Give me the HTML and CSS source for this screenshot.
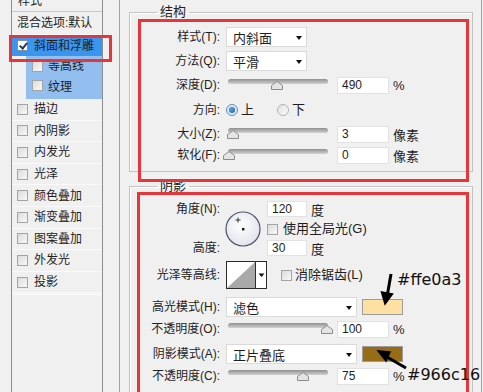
FILE: index.html
```html
<!DOCTYPE html>
<html lang="zh-CN">

<head>
    <meta charset="UTF-8">
    <title>图层样式 - 斜面和浮雕</title>
    <link rel="stylesheet" href="styles.css">
</head>

<body>
    <div class="sidebar">
        <div class="list">
            <div class="item head">样式</div>
            <div class="item blend">混合选项:默认</div>
            <div class="item selected"><span class="check on"></span>斜面和浮雕</div>
            <div class="item sub first"><span class="check"></span>等高线</div>
            <div class="item sub last"><span class="check"></span>纹理</div>
            <div class="item"><span class="check"></span>描边</div>
            <div class="item"><span class="check"></span>内阴影</div>
            <div class="item"><span class="check"></span>内发光</div>
            <div class="item"><span class="check"></span>光泽</div>
            <div class="item"><span class="check"></span>颜色叠加</div>
            <div class="item"><span class="check"></span>渐变叠加</div>
            <div class="item"><span class="check"></span>图案叠加</div>
            <div class="item"><span class="check"></span>外发光</div>
            <div class="item"><span class="check"></span>投影</div>
        </div>
    </div>

    <div class="main">
        <fieldset class="group structure">
            <legend>结构</legend>
            <div class="row h24">
                <label class="lbl">样式(T):</label>
                <div class="select short">内斜面<span class="caret"></span></div>
            </div>
            <div class="row h24">
                <label class="lbl">方法(Q):</label>
                <div class="select short">平滑<span class="caret"></span></div>
            </div>
            <div class="row h24">
                <label class="lbl">深度(D):</label>
                <div class="slider"><span class="track"></span><span class="thumb" style="left:49%"><svg width="12" height="9" viewBox="0 0 12 9"><path d="M6 0.5L11.5 4.5V8.5H0.5V4.5Z" fill="#e4e4e4" stroke="#8c8c8c"/></svg></span></div>
                <input class="num" value="490">
                <span class="unit">%</span>
            </div>
            <div class="row h26">
                <label class="lbl">方向:</label>
                <span class="radio on"></span><span class="opt">上</span>
                <span class="radio gap"></span><span class="opt">下</span>
            </div>
            <div class="row h22">
                <label class="lbl">大小(Z):</label>
                <div class="slider"><span class="track"></span><span class="thumb" style="left:5%"><svg width="12" height="9" viewBox="0 0 12 9"><path d="M6 0.5L11.5 4.5V8.5H0.5V4.5Z" fill="#e4e4e4" stroke="#8c8c8c"/></svg></span></div>
                <input class="num" value="3">
                <span class="unit">像素</span>
            </div>
            <div class="row h20">
                <label class="lbl">软化(F):</label>
                <div class="slider"><span class="track"></span><span class="thumb" style="left:1%"><svg width="12" height="9" viewBox="0 0 12 9"><path d="M6 0.5L11.5 4.5V8.5H0.5V4.5Z" fill="#e4e4e4" stroke="#8c8c8c"/></svg></span></div>
                <input class="num" value="0">
                <span class="unit">像素</span>
            </div>
        </fieldset>

        <fieldset class="group shading">
            <legend>阴影</legend>
            <div class="angle">
                <label class="lbl r1">角度(N):</label>
                <div class="dial">
                    <svg width="36" height="36" viewBox="0 0 36 36">
                        <defs>
                            <radialGradient id="dialFill" cx="0.45" cy="0.4" r="0.6">
                                <stop offset="0" stop-color="#ffffff"/>
                                <stop offset="1" stop-color="#e2e4ea"/>
                            </radialGradient>
                        </defs>
                        <circle cx="18" cy="18" r="17" fill="url(#dialFill)" stroke="#4a5470" stroke-width="1.2"/>
                        <path d="M13 6.5V11.5M10.5 9H15.5" stroke="#333" stroke-width="1"/>
                        <rect x="17" y="17" width="2.4" height="2.4" fill="#111"/>
                    </svg>
                </div>
                <div class="ctl r1"><input class="num small" value="120"><span class="unit">度</span></div>
                <div class="ctl r2"><span class="check"></span><span class="opt">使用全局光(G)</span></div>
                <label class="lbl r3">高度:</label>
                <div class="ctl r3"><input class="num small" value="30"><span class="unit">度</span></div>
            </div>
            <div class="row contour-row">
                <label class="lbl">光泽等高线:</label>
                <div class="contour">
                    <svg width="41" height="28" viewBox="0 0 41 28">
                        <rect x="0.5" y="0.5" width="40" height="27" fill="#fff" stroke="#2a2a2a"/>
                        <path d="M1 27L29 1V27Z" fill="#a9a9a9"/>
                        <path d="M29.5 1V27" stroke="#2a2a2a"/>
                        <path d="M32.5 12.5H38.5L35.5 16Z" fill="#111"/>
                    </svg>
                </div>
                <span class="check aa"></span><span class="opt">消除锯齿(L)</span>
            </div>
            <div class="row h22 mt5">
                <label class="lbl">高光模式(H):</label>
                <div class="select long">滤色<span class="caret"></span></div>
                <span class="swatch light"></span>
            </div>
            <div class="row h22">
                <label class="lbl">不透明度(O):</label>
                <div class="slider"><span class="track"></span><span class="thumb" style="left:99%"><svg width="12" height="9" viewBox="0 0 12 9"><path d="M6 0.5L11.5 4.5V8.5H0.5V4.5Z" fill="#e4e4e4" stroke="#8c8c8c"/></svg></span></div>
                <input class="num" value="100">
                <span class="unit">%</span>
            </div>
            <div class="row h22 mt3">
                <label class="lbl">阴影模式(A):</label>
                <div class="select long">正片叠底<span class="caret"></span></div>
                <span class="swatch dark"></span>
            </div>
            <div class="row h22">
                <label class="lbl">不透明度(C):</label>
                <div class="slider"><span class="track"></span><span class="thumb" style="left:75%"><svg width="12" height="9" viewBox="0 0 12 9"><path d="M6 0.5L11.5 4.5V8.5H0.5V4.5Z" fill="#e4e4e4" stroke="#8c8c8c"/></svg></span></div>
                <input class="num" value="75">
                <span class="unit">%</span>
            </div>
        </fieldset>
    </div>

    <!-- annotations drawn over the dialog -->
    <div class="mark m-list"></div>
    <div class="mark m-structure"></div>
    <div class="mark m-shading"></div>
    <div class="hex hex-light">#ffe0a3</div>
    <div class="hex hex-dark">#966c16</div>
    <svg class="arrows" width="483" height="392" viewBox="0 0 483 392">
        <path d="M391 274L387.5 294" stroke="#000" stroke-width="3"/>
        <path d="M381.5 292L385 304L392.5 294Z" fill="#000" stroke="#000" stroke-width="1.5"/>
        <path d="M406 368L387 357" stroke="#000" stroke-width="3"/>
        <path d="M390 352L378 351L386 361Z" fill="#000" stroke="#000" stroke-width="1.5"/>
    </svg>
</body>

</html>
```

FILE: styles.css
```css
body {
    margin: 0;
    width: 483px;
    height: 392px;
    overflow: hidden;
    position: relative;
    display: flex;
    align-items: stretch;
    background: #f0f0f0;
    color: #1e1e1e;
    font-family: "Liberation Sans", "Noto Sans CJK SC", sans-serif;
    font-size: 12px;
}

/* left list of effects */
.sidebar {
    margin-left: 11px;
    width: 90px;
    border-left: 1px solid #8e8e8e;
    border-right: 1px solid #8e8e8e;
    flex-shrink: 0;
}

.list {
    margin-top: -10px;
    border-bottom: 1px solid #fdfdfd;
    padding-bottom: 1px;
}

.item {
    display: flex;
    align-items: center;
    gap: 6px;
    height: 21.6px;
    padding-left: 5px;
    box-sizing: border-box;
    border-bottom: 1px solid #fafafa;
    line-height: 14px;
    white-space: nowrap;
}

.item.head {
    height: 22px;
    padding-left: 6px;
    border-bottom: 1px solid #c9c9c9;
}

.item.blend {
    height: 23px;
}

.item.selected {
    height: 21px;
    background: #3a95ee;
    border-bottom: none;
}

.item.sub {
    margin-left: 14px;
    padding-left: 6px;
    gap: 5px;
    height: 20px;
    background: #92bff0;
    border-bottom: none;
}

.item.sub.last {
    height: 23px;
    align-items: flex-start;
    padding-top: 4px;
}

.check {
    width: 11px;
    height: 11px;
    box-sizing: border-box;
    border: 1px solid #a4a4a4;
    background: linear-gradient(135deg, #dcdcdc, #f8f8f8);
    flex-shrink: 0;
    position: relative;
}

.check.on {
    background: #fff;
    border-color: #7f8ea3;
}

.check.on::after {
    content: "";
    position: absolute;
    left: 3px;
    top: 0px;
    width: 3px;
    height: 6px;
    border-right: 2px solid #2b3a55;
    border-bottom: 2px solid #2b3a55;
    transform: rotate(40deg);
}

/* right panel */
.main {
    margin-left: 16px;
    width: 344px;
    padding: 0 8px 0 9px;
    border-left: 1px solid #a3a3a3;
    border-right: 1px solid #a3a3a3;
    flex-shrink: 0;
}

.group {
    margin: 0;
    padding: 5px 0 6px 10px;
    border: 1px solid #c3c3c3;
    box-shadow: inset 1px 1px 0 #fff;
    min-width: 0;
}

.group legend {
    margin-left: 17px;
    padding: 0 3px;
    font-size: 13px;
    line-height: 16px;
}

.structure {
    margin-top: 4px;
}

.shading {
    margin-top: 6px;
    border-bottom: none;
    padding-bottom: 40px;
}

.row {
    display: flex;
    align-items: center;
}

.h20 { height: 20px; }
.h22 { height: 22px; }
.h24 { height: 24px; }
.h26 { height: 26px; }
.mt3 { margin-top: 3px; }
.mt5 { margin-top: 5px; }

.lbl {
    width: 80px;
    text-align: right;
    margin-right: 6px;
    flex-shrink: 0;
    line-height: 14px;
    white-space: nowrap;
}

.select {
    position: relative;
    height: 20px;
    box-sizing: border-box;
    border: 1px solid #dadada;
    background: #fff;
    padding-left: 6px;
    display: flex;
    align-items: center;
    font-size: 13px;
}

.select.short {
    width: 81px;
}

.select.long {
    width: 131px;
}

.caret {
    position: absolute;
    right: 4px;
    top: 8px;
    border-left: 3.5px solid transparent;
    border-right: 3.5px solid transparent;
    border-top: 4px solid #111;
}

.slider {
    position: relative;
    width: 100px;
    height: 14px;
    margin-left: 2px;
    margin-right: 9px;
    flex-shrink: 0;
}

.track {
    position: absolute;
    left: 0;
    right: 0;
    top: 1px;
    height: 5px;
    border-radius: 3px;
    background: linear-gradient(#8f8f8f, #d2d2d2);
}

.thumb {
    position: absolute;
    top: 3px;
    margin-left: -6px;
    width: 12px;
    height: 9px;
    line-height: 0;
}

.num {
    width: 52px;
    height: 17px;
    box-sizing: border-box;
    border: 1px solid #e2e2e2;
    background: #fff;
    padding: 0 0 0 4px;
    margin: 0;
    font-family: inherit;
    font-size: 12px;
    color: #1e1e1e;
    outline: none;
}

.num.small {
    width: 40px;
    height: 16px;
}

.unit {
    margin-left: 4px;
    font-size: 13px;
}

.radio {
    width: 12px;
    height: 12px;
    box-sizing: border-box;
    border-radius: 50%;
    border: 1px solid #b3b3b3;
    background: linear-gradient(135deg, #e0e0e0, #fbfbfb);
    margin-left: 0;
    position: relative;
}

.radio.on {
    border-color: #6a8db5;
    background: #dbe9f7;
}

.radio.on::after {
    content: "";
    position: absolute;
    left: 2px;
    top: 2px;
    width: 6px;
    height: 6px;
    border-radius: 50%;
    background: radial-gradient(circle at 40% 35%, #5aa0de, #1d5e9e);
}

.radio.gap {
    margin-left: 23px;
}

.opt {
    margin-left: 3px;
    font-size: 13px;
    line-height: 14px;
    white-space: nowrap;
}

.angle {
    display: grid;
    grid-template-columns: 80px 47px 1fr;
    grid-template-rows: 20px 20px 18px;
    align-items: center;
}

.angle .lbl {
    grid-column: 1;
}

.r1 { grid-row: 1; }
.r2 { grid-row: 2; }
.r3 { grid-row: 3; }

.ctl {
    grid-column: 3;
    display: flex;
    align-items: center;
}

.ctl .check {
    margin-right: 2px;
}

.dial {
    grid-column: 2;
    grid-row: 1 / 4;
    margin-left: 5px;
    margin-top: 2px;
    line-height: 0;
}

.contour-row {
    height: 32px;
    margin-top: 2px;
}

.contour {
    line-height: 0;
}

.check.aa {
    margin-left: 14px;
}

.swatch {
    width: 41px;
    height: 16px;
    box-sizing: border-box;
    margin-left: 5px;
    border: 1px solid #9c9c9c;
}

.swatch.light {
    background: #ffe0a3;
}

.swatch.dark {
    background: #966c16;
}

/* annotations */
.mark {
    position: absolute;
    box-sizing: border-box;
    border: 3px solid #e5363c;
}

.m-list {
    left: 9px;
    top: 35px;
    width: 103px;
    height: 27px;
}

.m-structure {
    left: 138px;
    top: 19px;
    width: 331px;
    height: 163px;
}

.m-shading {
    left: 137px;
    top: 192px;
    width: 332px;
    height: 230px;
}

.hex {
    position: absolute;
    font-family: "DejaVu Sans", sans-serif;
    font-size: 16px;
    line-height: 20px;
    color: #111;
}

.hex-light {
    left: 397px;
    top: 270px;
}

.hex-dark {
    left: 407px;
    top: 365px;
}

.arrows {
    position: absolute;
    left: 0;
    top: 0;
    pointer-events: none;
}
```
